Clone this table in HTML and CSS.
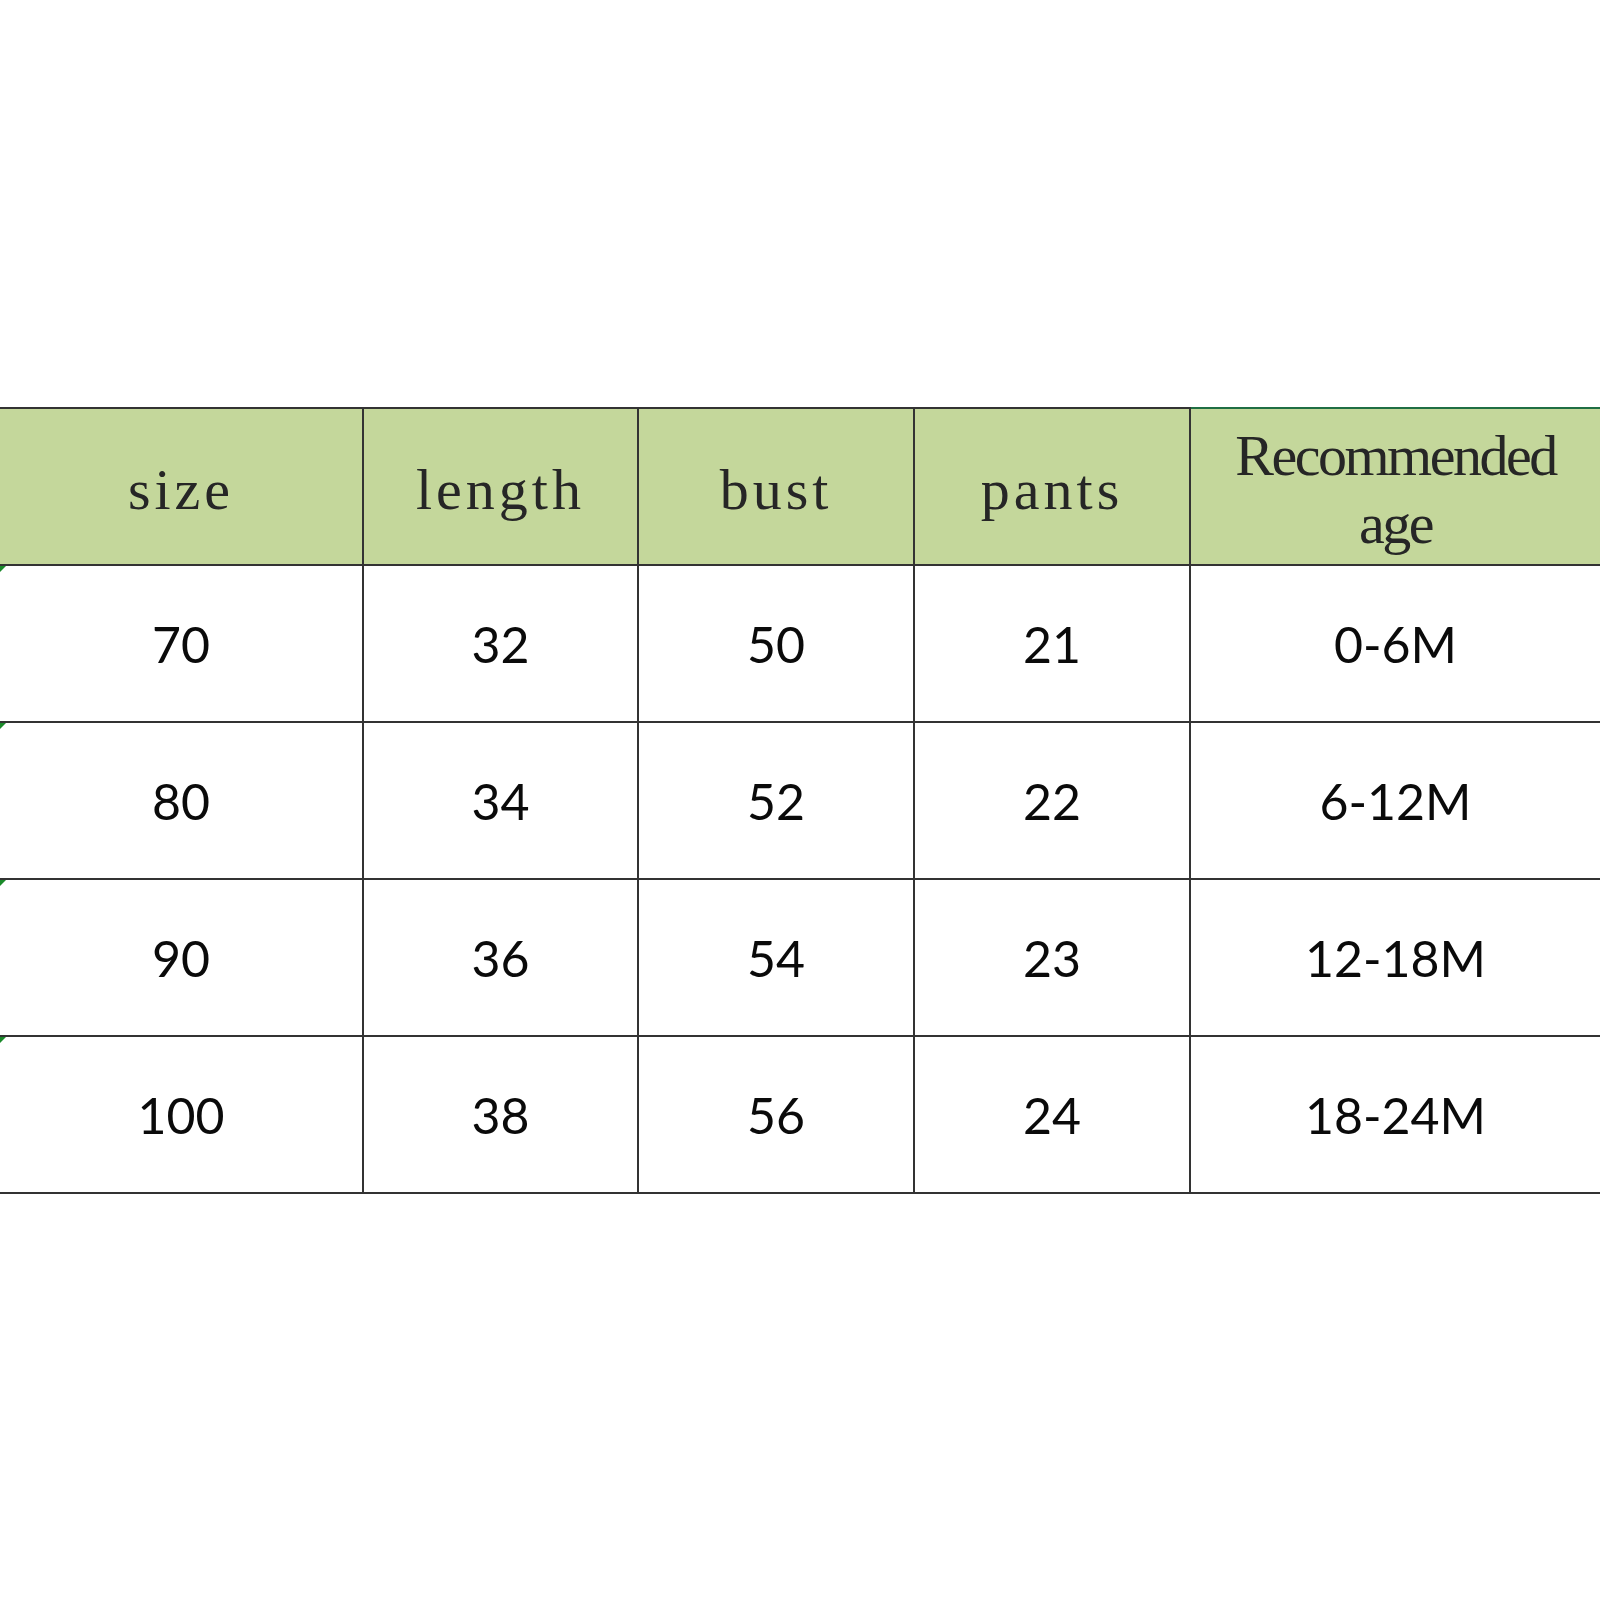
FILE: index.html
```html
<!DOCTYPE html>
<html>
<head>
<meta charset="utf-8">
<link rel="stylesheet" href="styles.css">
</head>
<body>
<div class="sheet">
  <table class="size-table">
    <colgroup>
      <col class="c1"><col class="c2"><col class="c3"><col class="c4"><col class="c5">
    </colgroup>
    <thead>
      <tr>
        <th class="first">size</th>
        <th>length</th>
        <th>bust</th>
        <th>pants</th>
        <th class="last rec">Recommended<br>age</th>
      </tr>
    </thead>
    <tbody>
      <tr><td class="first">70</td><td>32</td><td>50</td><td>21</td><td class="last">0-6M</td></tr>
      <tr><td class="first">80</td><td>34</td><td>52</td><td>22</td><td class="last">6-12M</td></tr>
      <tr><td class="first">90</td><td>36</td><td>54</td><td>23</td><td class="last">12-18M</td></tr>
      <tr><td class="first">100</td><td>38</td><td>56</td><td>24</td><td class="last">18-24M</td></tr>
    </tbody>
  </table>
</div>
</body>
</html>
```
FILE: styles.css
```css
html, body {
  margin: 0;
  padding: 0;
  background: #ffffff;
}

.sheet {
  padding-top: 407px;
}

.size-table {
  border-collapse: collapse;
  table-layout: fixed;
  width: 1600px;
}

.c1 { width: 363px; }
.c2 { width: 275px; }
.c3 { width: 276px; }
.c4 { width: 276px; }
.c5 { width: 410px; }

.size-table th,
.size-table td {
  border: 2px solid #333333;
  padding: 0;
  text-align: center;
  vertical-align: middle;
}

.size-table tr {
  height: 157px;
}

.size-table th {
  background: #c4d79b;
  color: #262626;
  font-family: "Liberation Serif", serif;
  font-weight: normal;
  font-size: 58px;
  line-height: 68px;
  letter-spacing: 4px;
  padding-top: 6px;
}

.size-table th.rec {
  letter-spacing: -2.5px;
  border-top-color: #1f6e43;
}

.size-table td {
  font-family: Lato, "Open Sans", sans-serif;
  font-size: 50px;
  color: #0a0a0a;
}

.size-table .first {
  border-left: none;
}

.size-table .last {
  border-right: none;
}

.size-table td.first {
  position: relative;
}

.size-table td.first::before {
  content: "";
  position: absolute;
  left: 0;
  top: 0;
  width: 0;
  height: 0;
  border-top: 6px solid #1a8a2a;
  border-right: 6px solid transparent;
}
```
